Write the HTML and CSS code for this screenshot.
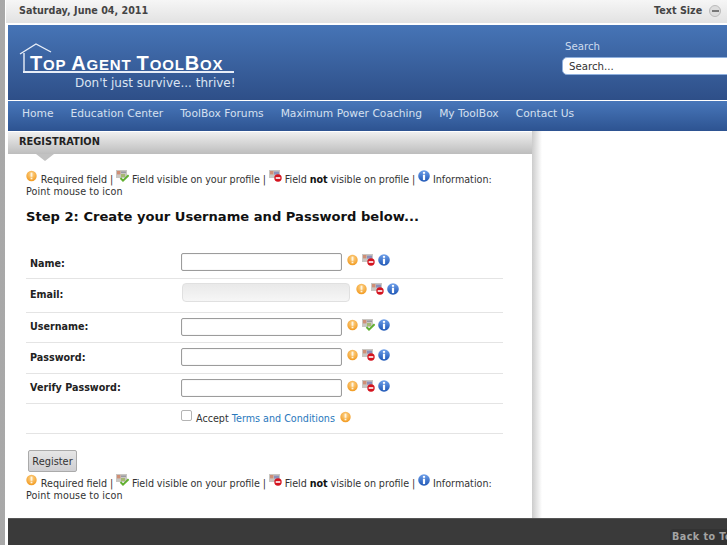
FILE: index.html
```html
<!DOCTYPE html>
<html lang="en">
<head>
<meta charset="utf-8">
<title>Top Agent ToolBox - Registration</title>
<link rel="stylesheet" href="styles.css">
</head>
<body>
<svg class="defs" width="0" height="0" aria-hidden="true">
  <defs>
    <radialGradient id="g-req" cx="50%" cy="35%" r="65%">
      <stop offset="0" stop-color="#fdd58f"/>
      <stop offset="1" stop-color="#f29a1f"/>
    </radialGradient>
    <linearGradient id="g-info" x1="0" y1="0" x2="0" y2="1">
      <stop offset="0" stop-color="#6fa0ea"/>
      <stop offset="1" stop-color="#1d55b5"/>
    </linearGradient>
  </defs>
  <symbol id="i-req" viewBox="0 0 12 12">
    <circle cx="5.5" cy="6" r="5.2" fill="url(#g-req)"/>
    <rect x="4.6" y="2.6" width="1.8" height="4.2" fill="#fff4df"/>
    <rect x="4.6" y="7.7" width="1.8" height="1.6" fill="#fff4df"/>
  </symbol>
  <symbol id="i-vis" viewBox="0 0 13 12">
    <rect x="0" y="0" width="11" height="8" fill="#c9c6c2"/>
    <rect x="1" y="1" width="3.4" height="3.4" fill="#cf8f76"/>
    <rect x="5" y="1.6" width="5" height="1.2" fill="#8f8f9a"/>
    <rect x="5" y="4" width="4" height="3" fill="#a6b872"/>
    <path d="M4.5 8 L7 10.6 L12.6 5.2" fill="none" stroke="#62b032" stroke-width="2"/>
  </symbol>
  <symbol id="i-hid" viewBox="0 0 13 12">
    <rect x="0" y="0" width="11" height="8" fill="#c9c6c2"/>
    <rect x="1" y="1" width="3.4" height="3.4" fill="#cf8f76"/>
    <rect x="5" y="1.6" width="5" height="3" fill="#8d8fb8"/>
    <circle cx="9" cy="8" r="3.7" fill="#d4141f"/>
    <rect x="6.7" y="7.2" width="4.6" height="1.6" fill="#fff"/>
  </symbol>
  <symbol id="i-info" viewBox="0 0 12 12">
    <circle cx="6" cy="6" r="5.8" fill="url(#g-info)"/>
    <rect x="4.9" y="1.9" width="2.2" height="1.9" fill="#fff"/>
    <rect x="4.9" y="4.7" width="2.2" height="5.4" fill="#fff"/>
  </symbol>
</svg>

<div class="page">
  <div class="topbar">
    <span class="date">Saturday, June 04, 2011</span>
    <div class="textsize">
      <span>Text Size</span>
      <span class="size-btn"><span class="size-bar"></span></span>
      <span class="size-btn"><span class="size-bar"></span></span>
    </div>
  </div>

  <header class="masthead">
    <div class="logo">
      <svg class="logo-house" width="216" height="32" viewBox="0 0 216 32" aria-hidden="true">
        <path d="M1 11 L17 1 L32 9" fill="none" stroke="#e8eef8" stroke-width="1.4"/>
        <path d="M5 10 V29" fill="none" stroke="#e8eef8" stroke-width="1.4"/>
        <path d="M4 29 H215" fill="none" stroke="#e8eef8" stroke-width="2"/>
      </svg>
      <div class="logo-title"><span class="cap">T</span>op <span class="cap">A</span>gent <span class="cap">T</span>ool<span class="cap">B</span>ox</div>
      <div class="logo-tag">Don't just survive... thrive!</div>
    </div>
    <div class="search">
      <label class="search-label" for="q">Search</label>
      <input class="search-input" id="q" type="text" value="Search...">
    </div>
  </header>

  <nav class="nav">
    <a href="#">Home</a>
    <a href="#">Education Center</a>
    <a href="#">ToolBox Forums</a>
    <a href="#">Maximum Power Coaching</a>
    <a href="#">My ToolBox</a>
    <a href="#">Contact Us</a>
  </nav>

  <div class="body-row">
    <main class="main">
      <div class="section-head">Registration</div>
      <div class="section-arrow"></div>
      <div class="content">
        <p class="legend">
          <svg class="ic up"><use href="#i-req"/></svg> Required field | <svg class="ic up wide"><use href="#i-vis"/></svg> Field visible on your profile | <svg class="ic up wide"><use href="#i-hid"/></svg> Field <b>not</b> visible on profile | <svg class="ic up"><use href="#i-info"/></svg> Information: <span class="tail">Point mouse to icon</span>
        </p>
        <h2 class="step">Step 2: Create your Username and Password below...</h2>

        <div class="form">
          <div class="row row-name">
            <label class="lbl">Name:</label>
            <input class="field" type="text">
            <span class="icons"><svg class="ic"><use href="#i-req"/></svg><svg class="ic wide"><use href="#i-hid"/></svg><svg class="ic"><use href="#i-info"/></svg></span>
          </div>
          <div class="row row-email">
            <label class="lbl">Email:</label>
            <input class="field field-off" type="text" disabled>
            <span class="icons"><svg class="ic"><use href="#i-req"/></svg><svg class="ic wide"><use href="#i-hid"/></svg><svg class="ic"><use href="#i-info"/></svg></span>
          </div>
          <div class="row">
            <label class="lbl">Username:</label>
            <input class="field" type="text">
            <span class="icons"><svg class="ic"><use href="#i-req"/></svg><svg class="ic wide"><use href="#i-vis"/></svg><svg class="ic"><use href="#i-info"/></svg></span>
          </div>
          <div class="row row-tall">
            <label class="lbl">Password:</label>
            <input class="field" type="password">
            <span class="icons"><svg class="ic"><use href="#i-req"/></svg><svg class="ic wide"><use href="#i-hid"/></svg><svg class="ic"><use href="#i-info"/></svg></span>
          </div>
          <div class="row">
            <label class="lbl">Verify Password:</label>
            <input class="field" type="password">
            <span class="icons"><svg class="ic"><use href="#i-req"/></svg><svg class="ic wide"><use href="#i-hid"/></svg><svg class="ic"><use href="#i-info"/></svg></span>
          </div>
          <div class="row row-accept">
            <span class="lbl"></span>
            <span class="check"></span>
            <span class="accept">Accept <a href="#">Terms and Conditions</a></span>
            <svg class="ic"><use href="#i-req"/></svg>
          </div>
        </div>

        <button class="register" type="button">Register</button>
        <p class="legend legend-bottom">
          <svg class="ic up"><use href="#i-req"/></svg> Required field | <svg class="ic up wide"><use href="#i-vis"/></svg> Field visible on your profile | <svg class="ic up wide"><use href="#i-hid"/></svg> Field <b>not</b> visible on profile | <svg class="ic up"><use href="#i-info"/></svg> Information: <span class="tail">Point mouse to icon</span>
        </p>
      </div>
    </main>
    <div class="shadow"></div>
  </div>

  <footer class="footer">
    <a class="backtop" href="#">Back to Top</a>
  </footer>
</div>
</body>
</html>
```
FILE: styles.css
```css
* { box-sizing: border-box; }
html, body { margin: 0; height: 100%; overflow: hidden; }
body {
  background: linear-gradient(90deg, #a8a8a8, #cdcdcd 60%, #bbb);
  padding-left: 5px;
  font-family: "DejaVu Sans", sans-serif;
  font-size: 9.6px;
  color: #333;
}
.defs { position: absolute; }
.page {
  width: 800px;
  height: 545px;
  background: #fff;
  padding-left: 3px;
  display: flex;
  flex-direction: column;
}
.topbar {
  height: 23px;
  margin-left: -2px;
  padding: 0 0 2px 13px;
  display: flex;
  align-items: center;
  justify-content: space-between;
  background: linear-gradient(#f6f6f6, #e2e2e2);
  font-weight: bold;
  color: #444;
  font-size: 9.6px;
}
.textsize {
  display: flex;
  align-items: center;
  gap: 7px;
  width: 151px;
}
.size-btn {
  width: 12px;
  height: 12px;
  border-radius: 50%;
  background: #ddd;
  border: 1px solid #bbb;
  display: flex;
  align-items: center;
  justify-content: center;
}
.size-bar { width: 7px; height: 2px; background: #777; }
.masthead {
  margin-top: 2px;
  height: 75px;
  background: linear-gradient(#4674b6, #2e4f88);
  display: flex;
  flex-shrink: 0;
}
.logo {
  position: relative;
  width: 554px;
  padding: 28px 0 0 22px;
  color: #fff;
}
.logo-house { position: absolute; left: 11px; top: 18px; }
.logo-title {
  font-family: "Liberation Sans", sans-serif;
  font-weight: bold;
  font-size: 15px;
  line-height: 20px;
  letter-spacing: .85px;
  text-transform: uppercase;
  white-space: nowrap;
}
.cap { font-size: 20px; }
.logo-tag {
  margin: 1px 0 0 45px;
  font-size: 12px;
  line-height: 15px;
  color: #dbe4f2;
  white-space: nowrap;
}
.search { padding-top: 15px; }
.search-label {
  display: block;
  margin-left: 3px;
  font-size: 10.2px;
  line-height: 13px;
  color: #cfdcee;
}
.search-input {
  display: block;
  margin-top: 4px;
  width: 220px;
  height: 18px;
  border: 1px solid #8fb0de;
  border-radius: 5px;
  background: #fff;
  padding: 0 6px;
  font: 10.2px "DejaVu Sans", sans-serif;
  color: #333;
}
.nav {
  margin-top: 1px;
  height: 30px;
  flex-shrink: 0;
  background: linear-gradient(#4877ba, #2d5391);
  display: flex;
  align-items: center;
  gap: 17px;
  padding: 0 0 6px 14px;
  font-size: 10.7px;
}
.nav a { color: #d5e0f0; text-decoration: none; white-space: nowrap; }
.body-row { flex: 1; display: flex; min-height: 0; }
.main { width: 524px; }
.shadow { width: 10px; background: linear-gradient(90deg, #ccc, #fff); }
.section-head {
  margin-top: 1px;
  height: 22px;
  padding: 0 0 4px 11px;
  display: flex;
  align-items: center;
  background: linear-gradient(#efefef, #bdbdbd);
  font-size: 9.8px;
  font-weight: bold;
  text-transform: uppercase;
  color: #222;
}
.section-arrow {
  margin-left: 28px;
  width: 0;
  border-left: 9px solid transparent;
  border-right: 9px solid transparent;
  border-top: 7px solid #c2c2c2;
}
.content { padding: 9px 0 0 18px; }
.legend {
  margin: 0;
  width: 475px;
  line-height: 12px;
  color: #333;
  word-spacing: -.2px;
}
.legend b { color: #111; }
.tail { word-spacing: 0; letter-spacing: .1px; }
.ic { width: 12px; height: 12px; display: inline-block; vertical-align: middle; flex-shrink: 0; }
.ic.wide { width: 13px; }
.ic.up { vertical-align: 1px; }
.step {
  margin: 10px 0 0;
  font-size: 13.1px;
  line-height: 18px;
  font-weight: bold;
  color: #111;
}
.form { margin-top: 19px; width: 477px; }
.row {
  display: flex;
  align-items: center;
  height: 30px;
  padding-bottom: 2px;
  border-bottom: 1px solid #e4e4e4;
}
.row-tall { height: 31px; }
.row-name { height: 34px; padding-bottom: 0; }
.row-email { height: 34px; padding-bottom: 6px; }
.lbl {
  width: 155px;
  padding-left: 4px;
  font-size: 9.6px;
  font-weight: bold;
  color: #222;
  flex-shrink: 0;
}
.row-name .lbl { padding-top: 3px; }
.row-email .lbl { padding-top: 3px; }
.field {
  width: 161px;
  height: 18px;
  padding: 0;
  border: 1px solid #9c9c9c;
  border-radius: 2px;
  background: #fff;
  box-shadow: inset 0 0 1px #bbb;
}
.field-off {
  width: 168px;
  height: 19px;
  margin-left: 1px;
  border: 1px solid #e0e0e0;
  border-radius: 4px;
  background: linear-gradient(#e9e9e9, #f6f6f6);
  box-shadow: none;
}
.icons { display: flex; align-items: center; gap: 3px; margin-left: 5px; margin-top: -4px; }
.row-email .icons { margin-left: 6px; margin-top: -7px; }
.check {
  width: 11px;
  height: 11px;
  border: 1px solid #b4b4b4;
  border-radius: 2px;
  margin-top: -4px;
}
.accept { margin: 2px 4px 0 4px; }
.accept a { color: #2a78bd; text-decoration: none; }
.row-accept .ic { margin-top: -2px; margin-left: 1px; }
.register {
  display: block;
  margin: 16px 0 0 2px;
  width: 49px;
  height: 22px;
  padding: 0;
  border: 1px solid #aaa;
  border-radius: 2px;
  background: linear-gradient(#e6e6e6, #cfcfd2);
  font: 9.8px "DejaVu Sans", sans-serif;
  color: #333;
}
.legend-bottom { margin-top: 2px; }
.footer {
  height: 27px;
  flex-shrink: 0;
  background: #3a3a3a;
  border-top: 1px solid #555;
  padding: 10px 0 0 662px;
}
.backtop {
  display: block;
  width: 90px;
  height: 17px;
  padding: 2px 0 0 2px;
  background: #333;
  border-radius: 4px 0 0 0;
  color: #a3a3a3;
  font-size: 9.6px;
  font-weight: bold;
  letter-spacing: .45px;
  text-decoration: none;
}
```
